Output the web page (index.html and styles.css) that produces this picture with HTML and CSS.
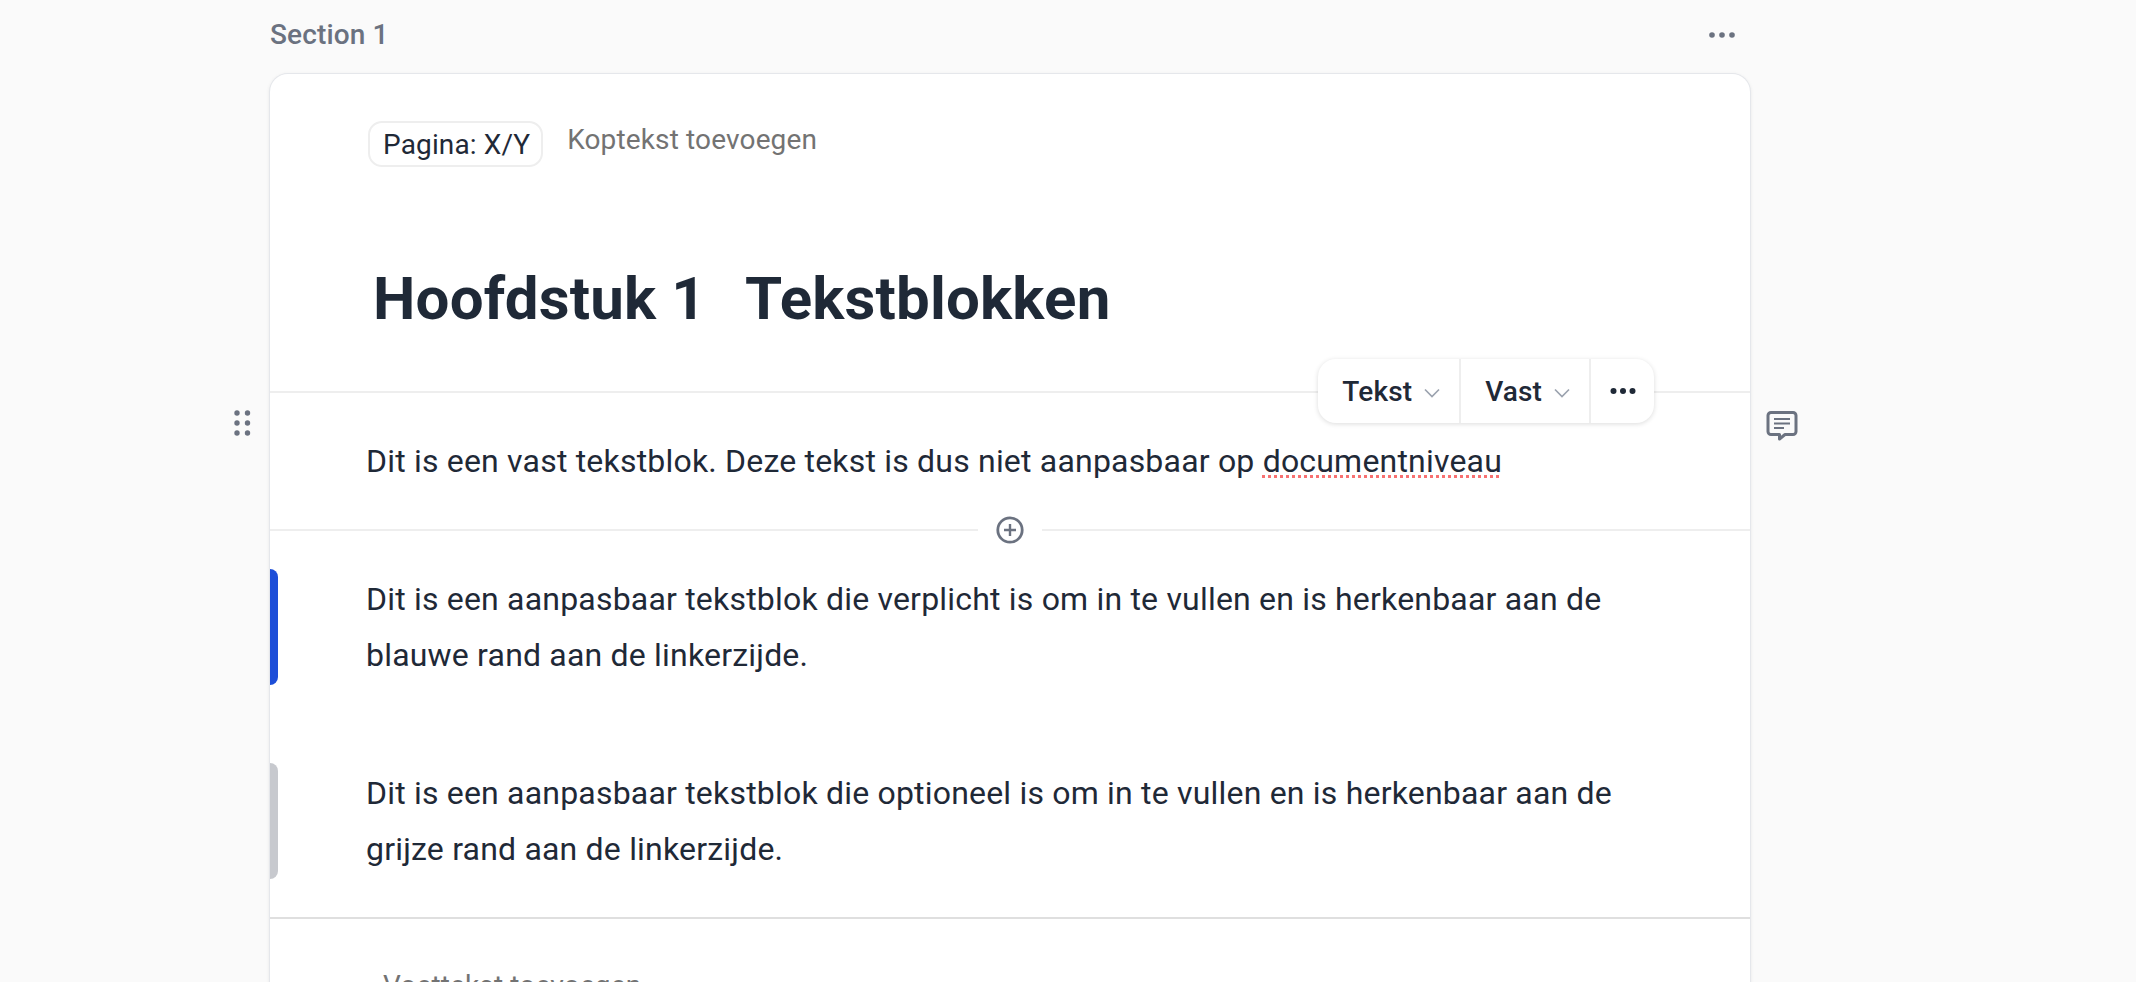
FILE: index.html
```html
<!DOCTYPE html>
<html lang="nl">
<head>
  <meta charset="UTF-8" />
  <title>Hoofdstuk 1 Tekstblokken</title>
  <link rel="stylesheet" href="styles.css">
</head>
<body>
  <main class="page">
    <div class="section-head">
      <span class="section-title">Section 1</span>
      <svg class="section-more" width="28" height="8" viewBox="0 0 28 8"><circle cx="4" cy="4" r="2.8"/><circle cx="14" cy="4" r="2.8"/><circle cx="24" cy="4" r="2.8"/></svg>
    </div>

    <div class="card">
      <header class="doc-head">
        <div class="doc-head-row">
          <span class="pill">Pagina: X/Y</span>
          <span class="placeholder">Koptekst toevoegen</span>
        </div>
        <h1 class="chapter"><span class="chapter-nr">Hoofdstuk 1</span><span>Tekstblokken</span></h1>
      </header>

      <section class="block block-fixed">
        <svg class="drag" width="18" height="28" viewBox="0 0 18 28"><g><circle cx="3" cy="4" r="2.7"/><circle cx="13.5" cy="4" r="2.7"/><circle cx="3" cy="14" r="2.7"/><circle cx="13.5" cy="14" r="2.7"/><circle cx="3" cy="24" r="2.7"/><circle cx="13.5" cy="24" r="2.7"/></g></svg>
        <svg class="comment" width="32" height="32" viewBox="0 0 32 32" fill="none"><path d="M5 2.500h22a3 3 0 0 1 3 3v16a3 3 0 0 1-3 3h-8l-5.500 4.500v-4.500h-8.500a3 3 0 0 1-3-3v-16a3 3 0 0 1 3-3z" stroke="#6b7280" stroke-width="3" stroke-linejoin="round"/><path d="M8 9h16M8 13.500h16M8 18h10" stroke="#6b7280" stroke-width="2"/></svg>
        <div class="toolbar">
          <div class="tool">Tekst<svg class="chev" width="16" height="10" viewBox="0 0 16 10" fill="none"><path d="M1 1.500l7 7 7-7" stroke="#9ca3af" stroke-width="1.700"/></svg></div>
          <div class="tool">Vast<svg class="chev" width="16" height="10" viewBox="0 0 16 10" fill="none"><path d="M1 1.500l7 7 7-7" stroke="#9ca3af" stroke-width="1.700"/></svg></div>
          <div class="tool tool-more"><svg width="26" height="8" viewBox="0 0 26 8"><circle cx="3.500" cy="4" r="3"/><circle cx="13" cy="4" r="3"/><circle cx="22.500" cy="4" r="3"/></svg></div>
        </div>
        <p>Dit is een vast tekstblok. Deze tekst is dus niet aanpasbaar op <span class="spell">documentniveau</span></p>
      </section>

      <div class="add-row">
        <svg width="28" height="28" viewBox="0 0 28 28" fill="none"><circle cx="14" cy="14" r="12.200" stroke="#6b7280" stroke-width="2.800"/><path d="M14 8v12M8 14h12" stroke="#6b7280" stroke-width="2.400"/></svg>
      </div>

      <section class="block block-required">
        <p>Dit is een aanpasbaar tekstblok die verplicht is om in te vullen en is herkenbaar aan de blauwe rand aan de linkerzijde.</p>
      </section>

      <section class="block block-optional">
        <p>Dit is een aanpasbaar tekstblok die optioneel is om in te vullen en is herkenbaar aan de grijze rand aan de linkerzijde.</p>
      </section>

      <footer class="doc-foot">
        <span class="placeholder">Voettekst toevoegen</span>
      </footer>
    </div>
  </main>
</body>
</html>
```
FILE: styles.css
```css
html, body {
  height: 100%;
}

body {
  margin: 0;
  overflow: hidden;
  font-family: Roboto, "Liberation Sans", sans-serif;
  background: #fafafa;
  color: #1f2937;
}

.page {
  width: 1480px;
  margin-left: 270px;
}

.section-head {
  display: flex;
  justify-content: space-between;
  align-items: center;
  height: 74px;
  padding: 0 14px 4px 0;
  box-sizing: border-box;
}

.section-title {
  margin-top: -2px;
  font-size: 28px;
  font-weight: 500;
  letter-spacing: 0.14px;
  color: #6b7280;
}

.section-more {
  fill: #6b7280;
}

.card {
  background: white;
  border-radius: 18px 18px 0 0;
  box-shadow: 0 0 0 1px #e5e7eb, 0 1px 4px rgba(0,0,0,0.12);
  height: 1000px;
}

.doc-head {
  height: 319px;
  box-sizing: border-box;
  padding: 47px 0 0 98px;
  border-bottom: 2px solid #eeeeee;
}

.doc-head-row {
  display: flex;
  align-items: flex-start;
  gap: 24px;
}

.pill {
  padding: 0 11px 0 13px;
  height: 46px;
  line-height: 44px;
  box-sizing: border-box;
  font-size: 28px;
  letter-spacing: 0.14px;
  border: 2px solid #eeeeee;
  border-radius: 14px;
}

.placeholder {
  font-size: 28px;
  letter-spacing: 0.14px;
  color: #737373;
}

.doc-head-row .placeholder {
  line-height: 38px;
}

.chapter {
  display: flex;
  gap: 39px;
  margin: 97px 0 0 5px;
  font-size: 60px;
  line-height: 70px;
  font-weight: 700;
  letter-spacing: 0.2px;
}

.block {
  position: relative;
}

.block p {
  margin: 0;
  padding: 0 100px 0 96px;
  font-size: 32px;
  line-height: 56px;
  letter-spacing: 0.195px;
}

.block-fixed {
  height: 136px;
}

.block-fixed p {
  padding-top: 40px;
}

.spell {
  text-decoration: underline dotted #f87171 3px;
  text-decoration-skip-ink: none;
  text-underline-offset: 3px;
}

.drag {
  position: absolute;
  left: -36px;
  top: 16px;
  fill: #6b7280;
}

.comment {
  position: absolute;
  right: -48px;
  top: 17px;
}

.toolbar {
  position: absolute;
  top: -34px;
  right: 96px;
  display: flex;
  height: 64px;
  background: white;
  border-radius: 18px;
  box-shadow: 0 1px 5px rgba(0,0,0,0.14);
}

.tool {
  display: flex;
  align-items: center;
  gap: 12px;
  padding: 0 19px 0 24px;
  font-size: 28px;
  font-weight: 500;
  letter-spacing: 0.14px;
  border-right: 2px solid #eeeeee;
}

.tool-more {
  border-right: none;
  justify-content: center;
  width: 63px;
  padding: 0;
  fill: #1f2937;
}

.chev {
  margin-top: 3px;
}

.add-row {
  position: relative;
  height: 2px;
  background: #eeeeee;
}

.add-row svg {
  position: absolute;
  left: 708px;
  top: -13px;
  padding: 0 18px;
  background: white;
}

.block-required,
.block-optional {
  height: 116px;
}

.block-required {
  margin-top: 38px;
}

.block-optional {
  margin-top: 78px;
}

.block-required p,
.block-optional p {
  padding-top: 2px;
}

.block-required::before,
.block-optional::before {
  content: "";
  position: absolute;
  left: 0;
  top: 0;
  bottom: 0;
  width: 8px;
  border-radius: 0 8px 8px 0;
}

.block-required::before {
  background: #1d4ed8;
}

.block-optional::before {
  background: #c7c9ce;
}

.doc-foot {
  margin-top: 38px;
  padding: 50px 0 0 113px;
  border-top: 2px solid #dfdfdf;
}
```
